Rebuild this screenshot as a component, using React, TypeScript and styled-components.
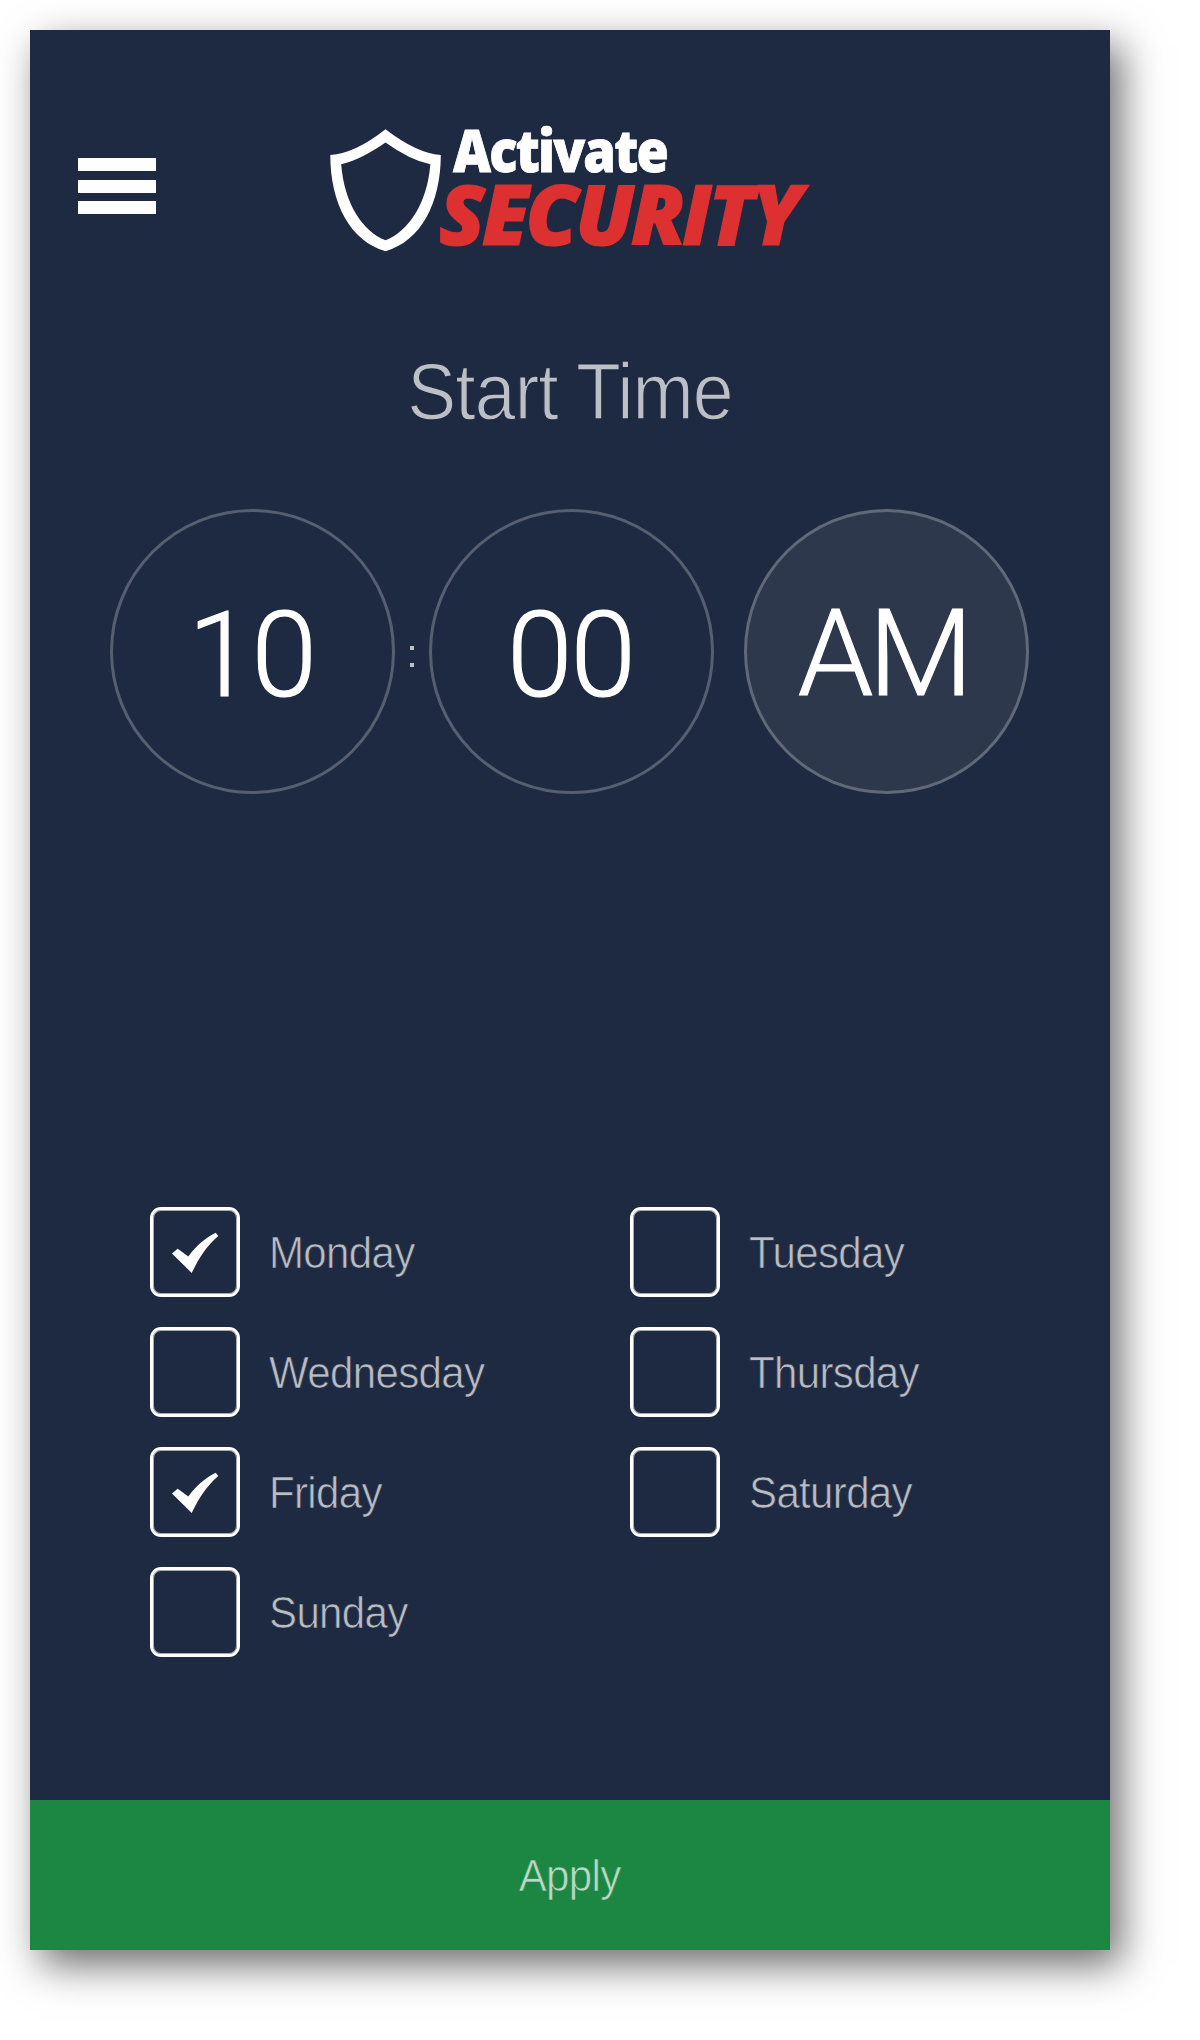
import { useState } from "react";
import styled, { createGlobalStyle } from "styled-components";

const navy = "#1e2a41";
const green = "#1c8742";

const GlobalStyle = createGlobalStyle`
  *, *::before, *::after { box-sizing: border-box; }
  body {
    margin: 0;
    background: #fff;
    font-family: "Liberation Sans", Arial, sans-serif;
  }
`;

const Page = styled.div`
  width: 1200px;
  height: 2040px;
  padding: 30px;
`;

const Phone = styled.main`
  display: flex;
  flex-direction: column;
  width: 1080px;
  height: 1920px;
  background: ${navy};
  box-shadow: 11px 15px 38px rgba(0, 0, 0, 0.58);
`;

const Header = styled.header`
  display: flex;
  align-items: center;
  gap: 174px;
  height: 312px;
  padding: 0 48px;
`;

const MenuButton = styled.button`
  display: flex;
  flex-direction: column;
  gap: 8.5px;
  width: 78px;
  padding: 0;
  border: 0;
  background: none;
  cursor: pointer;
`;

const MenuBar = styled.span`
  height: 13px;
  background: #fff;
`;

/* A hairline outline in the surface colour slims the letters to a light weight. */
const LightText = styled.span<{ $size: number; $spacing: number; $squeeze: number; $trim: number; $surface: string }>`
  display: inline-block;
  color: rgba(255, 255, 255, 0.7);
  font-size: ${(p) => p.$size}px;
  letter-spacing: ${(p) => p.$spacing}px;
  white-space: nowrap;
  -webkit-text-stroke: ${(p) => p.$trim}px ${(p) => p.$surface};
  transform: scaleX(${(p) => p.$squeeze});
`;

const Title = styled.h1`
  display: flex;
  justify-content: center;
  margin: 0;
  font-weight: 400;
  line-height: 100px;
`;

const TimeRow = styled.section`
  display: flex;
  align-items: center;
  margin-top: 67px;
  padding-left: 80px;
`;

const Dial = styled.button<{ $filled?: boolean }>`
  display: flex;
  align-items: center;
  justify-content: center;
  width: 285px;
  height: 285px;
  padding: 9px 2px 0 0;
  border: 3px solid rgba(255, 255, 255, 0.25);
  border-radius: 50%;
  background: ${(p) => (p.$filled ? "rgba(255, 255, 255, 0.065)" : "transparent")};
  color: #fff;
  font: 300 118px/1 Roboto, sans-serif;
  letter-spacing: -2px;
  -webkit-text-stroke: 1.2px #fff;
  cursor: pointer;
`;

const Meridiem = styled(Dial)`
  margin-left: 30px;
  padding: 5px 7px 0 0;
  font-size: 121px;
  letter-spacing: -5px;
`;

const Colon = styled.span`
  display: flex;
  flex-direction: column;
  align-items: center;
  justify-content: center;
  gap: 13px;
  width: 34px;
  padding-top: 10px;
`;

const ColonDot = styled.i`
  width: 4px;
  height: 4px;
  background: #bbbfc6;
`;

const Days = styled.section`
  display: grid;
  grid-template-columns: 480px 480px;
  grid-auto-rows: 90px;
  row-gap: 30px;
  margin-top: 413px;
  padding-left: 120px;
`;

const Day = styled.label`
  display: flex;
  align-items: center;
  gap: 29px;
  cursor: pointer;

  ${LightText} {
    padding-top: 2px;
    transform-origin: left center;
  }
`;

const HiddenInput = styled.input`
  appearance: none;
  width: 0;
  height: 0;
  margin: 0 -29px 0 0;
`;

const Box = styled.span`
  display: flex;
  align-items: center;
  justify-content: center;
  width: 90px;
  height: 90px;
  border: 3px solid #fff;
  border-radius: 11px;
  box-shadow: inset 0 0 0 1px rgba(255, 255, 255, 0.6);
`;

const Apply = styled.button`
  height: 150px;
  margin-top: auto;
  padding: 2px 0 0;
  border: 0;
  background: ${green};
  font-family: inherit;
  cursor: pointer;
`;

const WordWhite = styled.text`
  fill: #fff;
  stroke: #fff;
  stroke-width: 0.8px;
  font: 800 57.5px "Open Sans", sans-serif;
  letter-spacing: -2px;
`;

const WordRed = styled.text`
  fill: #dd3131;
  stroke: #dd3131;
  stroke-width: 1.2px;
  font: italic 800 84px "Open Sans", sans-serif;
`;

function Logo() {
  return (
    <svg width="500" height="180" viewBox="330 96 500 180" role="img" aria-label="Activate Security">
      <path
        fill="#fff"
        fillRule="evenodd"
        d="M385.5 129.3Q417 153.5 440.8 155C440.8 203 421 241 385.5 251.2C350 241 330.3 203 330.3 155Q355 153.5 385.5 129.3ZM385.5 142.4Q360 160 341.2 164.2C344 203 363 232 385.5 240.2C408 232 427.5 203 430.3 164.2Q410 160 385.5 142.4Z"
      />
      <WordWhite x="453" y="172.3" textLength="214" lengthAdjust="spacingAndGlyphs">Activate</WordWhite>
      <WordRed x="439" y="245" textLength="363" lengthAdjust="spacing">SECURITY</WordRed>
    </svg>
  );
}

function Tick() {
  return (
    <svg width="84" height="84" viewBox="153 1210 84 84" aria-hidden="true">
      <path
        fill="#fff"
        d="M172 1253.5L177.7 1248.7L188.3 1256.5C196 1246.5 204 1238.7 215.7 1232.8L218.3 1236C206.5 1246 199 1258 191.7 1273Z"
      />
    </svg>
  );
}

const days = ["Monday", "Tuesday", "Wednesday", "Thursday", "Friday", "Saturday", "Sunday"];

export default function App() {
  const [chosen, setChosen] = useState<string[]>(["Monday", "Friday"]);
  const toggle = (day: string) =>
    setChosen((now) => (now.includes(day) ? now.filter((d) => d !== day) : [...now, day]));

  return (
    <Page>
      <GlobalStyle />
      <Phone>
        <Header>
          <MenuButton aria-label="Menu">
            <MenuBar />
            <MenuBar />
            <MenuBar />
          </MenuButton>
          <Logo />
        </Header>
        <Title>
          <LightText $size={79} $spacing={-1} $squeeze={0.93} $trim={1.4} $surface={navy}>Start Time</LightText>
        </Title>
        <TimeRow>
          <Dial>10</Dial>
          <Colon aria-hidden="true">
            <ColonDot />
            <ColonDot />
          </Colon>
          <Dial>00</Dial>
          <Meridiem $filled>AM</Meridiem>
        </TimeRow>
        <Days>
          {days.map((day) => (
            <Day key={day}>
              <HiddenInput type="checkbox" checked={chosen.includes(day)} onChange={() => toggle(day)} />
              <Box>{chosen.includes(day) && <Tick />}</Box>
              <LightText $size={43.5} $spacing={-0.7} $squeeze={0.967} $trim={0.7} $surface={navy}>{day}</LightText>
            </Day>
          ))}
        </Days>
        <Apply>
          <LightText $size={43.5} $spacing={-0.7} $squeeze={0.967} $trim={0.7} $surface={green}>Apply</LightText>
        </Apply>
      </Phone>
    </Page>
  );
}
